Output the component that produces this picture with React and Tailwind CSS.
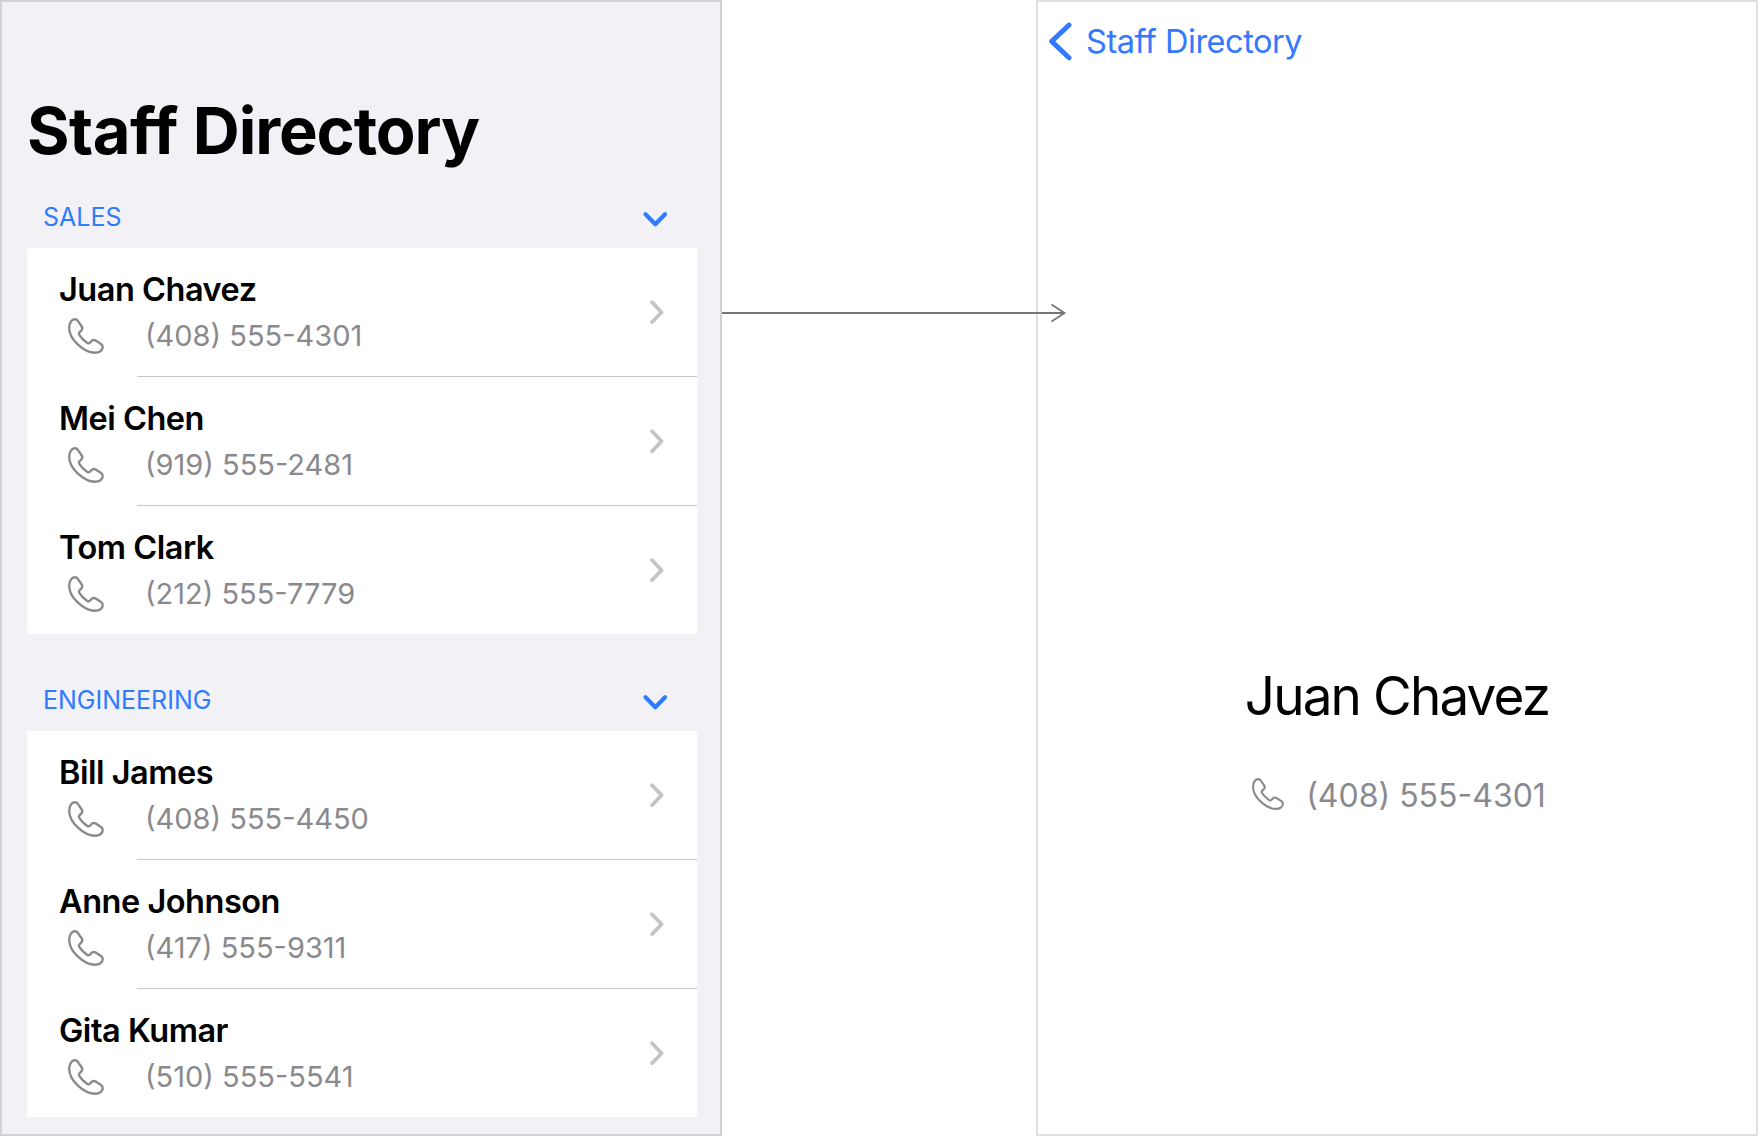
const sections = [
  {
    title: "SALES",
    people: [
      { name: "Juan Chavez", phone: "(408) 555-4301" },
      { name: "Mei Chen", phone: "(919) 555-2481" },
      { name: "Tom Clark", phone: "(212) 555-7779" },
    ],
  },
  {
    title: "ENGINEERING",
    people: [
      { name: "Bill James", phone: "(408) 555-4450" },
      { name: "Anne Johnson", phone: "(417) 555-9311" },
      { name: "Gita Kumar", phone: "(510) 555-5541" },
    ],
  },
];

function PhoneIcon({ className }) {
  return (
    <svg viewBox="0 0 36 36" fill="none" stroke="#8a8a8e" strokeWidth="2.4" strokeLinejoin="round" className={className}>
      <path d="M1.2 10C1.2 5 3.5 1.3 6.8 1.3C8.6 1.3 9.4 2 10 3.1L13.6 8.3C14.6 9.8 14.5 11.3 13.2 12.6L11.6 14.2C10.7 15.1 10.7 15.8 11.3 16.9C13 19.8 16.4 23 19.3 24.9C20.3 25.5 21.2 25.4 22 24.6L23.5 23C24.8 21.7 26.2 21.6 27.7 22.6L33 26.1C34.2 26.9 34.7 27.8 34.7 29.3C34.7 32.5 31.3 34.8 27 34.8C16 34.8 1.2 21.5 1.2 10Z" />
    </svg>
  );
}

function Chevron({ points, className, ...rest }) {
  return (
    <svg fill="none" strokeLinecap="round" strokeLinejoin="round" className={className} {...rest}>
      <polyline points={points} />
    </svg>
  );
}

function PersonRow({ name, phone, last }) {
  return (
    <li className="flex h-[129px] shrink-0 flex-col">
      <div className="flex flex-1 items-start justify-between pl-8 pr-[30px]">
        <div className="pt-[18.5px]">
          <div className="text-[32.5px] font-semibold leading-[46px] tracking-[-0.48px] text-black">{name}</div>
          <div className="flex text-[29px] leading-[46px] text-[#8a8a8e]">
            <PhoneIcon className="ml-[9px] mt-[5px] size-9" />
            <span className="ml-[41px]">{phone}</span>
          </div>
        </div>
        <Chevron points="3,3.2 12.6,13.2 3,23.2" width="18" height="27" stroke="#c4c4c6" strokeWidth="3.8" className="mt-[51px]" />
      </div>
      {!last && <div className="ml-[110px] h-px bg-[#c6c6c8]" />}
    </li>
  );
}

function Section({ title, people }) {
  return (
    <section>
      <div className="flex h-[62px] justify-between pl-4 pr-[28px]">
        <h2 className="text-[25px] leading-[62px] text-[#2f7cff]">{title}</h2>
        <Chevron points="3.5,3.2 13.3,13.2 23,3.2" width="27" height="17" stroke="#2f7cff" strokeWidth="4.2" className="mt-[25px]" />
      </div>
      <ul className="flex h-[386px] flex-col bg-white">
        {people.map((p, i) => (
          <PersonRow key={p.name} {...p} last={i === people.length - 1} />
        ))}
      </ul>
    </section>
  );
}

export default function App() {
  return (
    <div className="relative flex h-[1136px] w-[1758px] justify-between overflow-hidden bg-white font-['Inter',sans-serif]">
      <div className="h-full w-[722px] border-2 border-[#d1d1d6] bg-[#f2f1f6] pl-[25px] pr-[23px] pt-[89px]">
        <h1 className="mb-[15px] h-20 whitespace-nowrap text-[65px] font-bold leading-[80px] tracking-[-0.5px] text-black">
          Staff <span className="tracking-[-1.1px]">Directory</span>
        </h1>
        <div className="flex flex-col gap-[35px]">
          {sections.map((s) => (
            <Section key={s.title} {...s} />
          ))}
        </div>
      </div>

      <div className="flex h-full w-[722px] flex-col border-2 border-[#e0e0e0] bg-white">
        <div className="flex h-[80px] pl-[10px]">
          <Chevron points="21,3 3.7,19.4 21,35.8" width="25" height="40" stroke="#3478ff" strokeWidth="4.9" className="mt-[20px]" />
          <span className="ml-[13px] text-[32.5px] leading-[80px] tracking-[-0.47px] text-[#3478ff]">Staff Directory</span>
        </div>
        <div className="mt-[579px] flex flex-col items-center">
          <div className="text-[53px] leading-[70px] tracking-[-1.85px] text-black">Juan Chavez</div>
          <div className="ml-[4px] mt-[35px] flex text-[32px] leading-[60px] text-[#8a8a8e]">
            <PhoneIcon className="mt-[12px] size-8" />
            <span className="ml-[22px]">{"(408) 555-4301"}</span>
          </div>
        </div>
      </div>

      <svg width="346" height="24" fill="none" stroke="#767676" strokeWidth="1.8" className="absolute left-[722px] top-[301px]">
        <path d="M0 12H342M329.500 3.500L342.500 12L329.500 20.500" />
      </svg>
    </div>
  );
}
